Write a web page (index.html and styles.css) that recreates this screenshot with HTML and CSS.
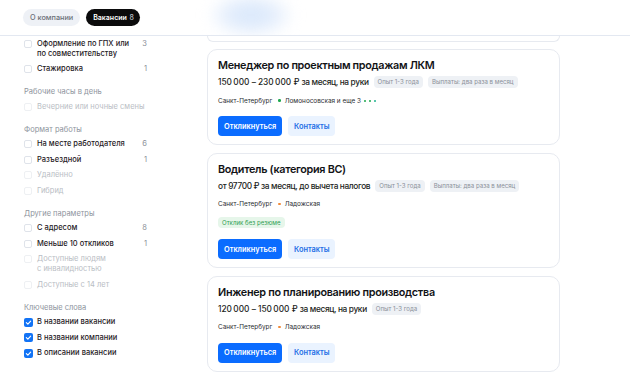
FILE: index.html
```html
<!DOCTYPE html>
<html lang="ru">
<head>
<meta charset="utf-8">
<link rel="stylesheet" href="styles.css">
</head>
<body>
<header class="header">
  <div class="blob"></div>
  <span class="tab">О компании</span>
  <span class="tab tab-active">Вакансии <span class="tab-count">8</span></span>
</header>
<main class="layout">
  <aside class="filters">
    <div class="section first">
      <label class="opt"><span class="box"></span><span class="lbl">Оформление по ГПХ или<br>по совместительству</span><span class="cnt">3</span></label>
      <label class="opt"><span class="box"></span><span class="lbl">Стажировка</span><span class="cnt">1</span></label>
    </div>
    <div class="section">
      <div class="sec-title">Рабочие часы в день</div>
      <label class="opt disabled"><span class="box"></span><span class="lbl">Вечерние или ночные смены</span></label>
    </div>
    <div class="section">
      <div class="sec-title">Формат работы</div>
      <label class="opt"><span class="box"></span><span class="lbl">На месте работодателя</span><span class="cnt">6</span></label>
      <label class="opt"><span class="box"></span><span class="lbl">Разъездной</span><span class="cnt">1</span></label>
      <label class="opt disabled"><span class="box"></span><span class="lbl">Удалённо</span></label>
      <label class="opt disabled"><span class="box"></span><span class="lbl">Гибрид</span></label>
    </div>
    <div class="section">
      <div class="sec-title">Другие параметры</div>
      <label class="opt"><span class="box"></span><span class="lbl">С адресом</span><span class="cnt">8</span></label>
      <label class="opt"><span class="box"></span><span class="lbl">Меньше 10 откликов</span><span class="cnt">1</span></label>
      <label class="opt disabled"><span class="box"></span><span class="lbl">Доступные людям<br>с инвалидностью</span></label>
      <label class="opt disabled"><span class="box"></span><span class="lbl">Доступные с 14 лет</span></label>
    </div>
    <div class="section">
      <div class="sec-title">Ключевые слова</div>
      <label class="opt"><span class="box checked"><svg viewBox="0 0 10 10"><path d="M2.6 5.2 4.3 6.8 7.4 3.4" fill="none" stroke="#fff" stroke-width="1.3" stroke-linecap="round" stroke-linejoin="round"/></svg></span><span class="lbl">В названии вакансии</span></label>
      <label class="opt"><span class="box checked"><svg viewBox="0 0 10 10"><path d="M2.6 5.2 4.3 6.8 7.4 3.4" fill="none" stroke="#fff" stroke-width="1.3" stroke-linecap="round" stroke-linejoin="round"/></svg></span><span class="lbl">В названии компании</span></label>
      <label class="opt"><span class="box checked"><svg viewBox="0 0 10 10"><path d="M2.6 5.2 4.3 6.8 7.4 3.4" fill="none" stroke="#fff" stroke-width="1.3" stroke-linecap="round" stroke-linejoin="round"/></svg></span><span class="lbl">В описании вакансии</span></label>
    </div>
  </aside>
  <section class="list">
    <div class="card-tail"></div>
    <article class="card">
      <h2 class="title">Менеджер по проектным продажам ЛКМ</h2>
      <div class="salary-row"><span class="salary">150&#8239;000 – 230&#8239;000 ₽ за месяц, на руки</span><span class="pill">Опыт 1-3 года</span><span class="pill">Выплаты: два раза в месяц</span></div>
      <div class="loc"><span>Санкт-Петербург</span><span class="metro"><i class="dot green"></i>Ломоносовская и еще 3<i class="dot green sm"></i><i class="dot green sm"></i><i class="dot teal sm"></i></span></div>
      <div class="actions"><button class="btn primary">Откликнуться</button><button class="btn secondary">Контакты</button></div>
    </article>
    <article class="card">
      <h2 class="title">Водитель (категория BC)</h2>
      <div class="salary-row"><span class="salary">от 97700 ₽ за месяц, до вычета налогов</span><span class="pill">Опыт 1-3 года</span><span class="pill">Выплаты: два раза в месяц</span></div>
      <div class="loc"><span>Санкт-Петербург</span><span class="metro"><i class="dot orange"></i>Ладожская</span></div>
      <div class="badge-row"><span class="pill green-pill">Отклик без резюме</span></div>
      <div class="actions after-badge"><button class="btn primary">Откликнуться</button><button class="btn secondary">Контакты</button></div>
    </article>
    <article class="card">
      <h2 class="title">Инженер по планированию производства</h2>
      <div class="salary-row"><span class="salary">120&#8239;000 – 150&#8239;000 ₽ за месяц, на руки</span><span class="pill">Опыт 1-3 года</span></div>
      <div class="loc"><span>Санкт-Петербург</span><span class="metro"><i class="dot orange"></i>Ладожская</span></div>
      <div class="actions"><button class="btn primary">Откликнуться</button><button class="btn secondary">Контакты</button></div>
    </article>
  </section>
</main>
</body>
</html>
```
FILE: styles.css
```css
* { box-sizing: border-box; }
html, body { margin: 0; padding: 0; background: #fff; }
body {
  font-family: Inter, "Noto Sans", "DejaVu Sans", sans-serif;
  color: #1b1d21;
  overflow: hidden;
  height: 373px;
}
.header {
  position: relative;
  height: 36px;
  border-bottom: 1px solid #e3e8f1;
  display: flex;
  align-items: center;
  gap: 6px;
  padding: 0 0 1px 23px;
  overflow: hidden;
}
.blob {
  position: absolute;
  left: 208px;
  top: -8px;
  width: 86px;
  height: 46px;
  border-radius: 50%;
  background: radial-gradient(ellipse at center, #d8e7fb 0%, #e4eefc 40%, rgba(240,246,254,0) 72%);
  filter: blur(7px);
}
.tab {
  position: relative;
  height: 17px;
  line-height: 17px;
  padding: 0 7px;
  border-radius: 9px;
  font-size: 7.3px;
  font-weight: 500;
  background: #eef1f6;
  color: #6b7078;
}
.tab-active {
  background: #0b0b0c;
  color: #fff;
  font-weight: 600;
  padding: 0 6px 0 7px;
  font-size: 7px;
}
.tab-count { color: #b8bcc3; margin-left: 1px; font-weight: 500; }

.layout {
  display: grid;
  grid-template-columns: 207px 353px;
  align-items: start;
}
.filters { padding-left: 24px; }
.section { margin-top: 10px; }
.section.first { margin-top: 0; }
.sec-title {
  font-size: 7.5px;
  line-height: 10px;
  color: #8e949d;
  margin-bottom: 2px;
}
.opt {
  display: flex;
  align-items: flex-start;
  width: 123px;
  padding: 2.75px 0;
  font-size: 7.5px;
  line-height: 10px;
  font-weight: 500;
  color: #1f2125;
}
.box {
  flex: 0 0 auto;
  width: 8px;
  height: 8px;
  margin-top: 1px;
  margin-right: 5px;
  border: 1px solid #dfe3ea;
  border-radius: 2px;
  background: #fff;
  display: flex;
  align-items: center;
  justify-content: center;
}
.box.checked {
  width: 9px;
  height: 9px;
  margin-top: 0.5px;
  margin-left: -0.5px;
  margin-right: 4.5px;
  border: none;
  background: #1273f5;
}
.box svg { width: 9px; height: 9px; display: block; }
.lbl { flex: 1; }
.cnt { color: #8b9098; font-weight: 400; width: 6px; text-align: right; }
.opt.disabled { color: #b9bdc4; font-weight: 400; }
.opt.disabled .box { border-color: #eef0f3; }

.list {
  display: flex;
  flex-direction: column;
  gap: 7.5px;
}
.card-tail {
  height: 5.5px;
  border: 1px solid #e7eaf0;
  border-top: none;
  border-radius: 0 0 10px 10px;
}
.card {
  border: 1px solid #e7eaf0;
  border-radius: 10px;
  padding: 10px 10px 8px;
}
.title {
  margin: 0 0 4px;
  font-size: 10.8px;
  line-height: 12px;
  font-weight: 600;
  letter-spacing: -0.3px;
  color: #121316;
}
.salary-row {
  display: flex;
  align-items: center;
  gap: 5px;
  height: 12px;
}
.salary {
  font-size: 8.3px;
  font-weight: 500;
  letter-spacing: -0.35px;
  color: #1c1e22;
  white-space: nowrap;
}
.pill {
  height: 12px;
  line-height: 12px;
  padding: 0 4px;
  border-radius: 4px;
  background: #eef1f5;
  color: #8a9099;
  font-size: 6.1px;
  white-space: nowrap;
}
.green-pill {
  background: #e6f6ea;
  color: #2f9e52;
  height: 11px;
  line-height: 11px;
  display: inline-block;
}
.loc {
  margin-top: 7.5px;
  display: flex;
  align-items: center;
  gap: 6px;
  height: 10px;
  font-size: 6.4px;
  color: #2b2d31;
}
.metro { display: inline-flex; align-items: center; }
.dot {
  display: inline-block;
  width: 2.5px;
  height: 2.5px;
  border-radius: 50%;
  margin-right: 4px;
}
.dot.sm { margin: 0 0 0 3px; width: 2px; height: 2px; }
.dot.green { background: #1fa84f; }
.dot.teal { background: #1fb38f; }
.dot.orange { background: #f08a3a; }
.badge-row { margin-top: 8px; height: 11px; display: flex; }
.actions {
  margin-top: 10.5px;
  display: flex;
  gap: 6px;
}
.actions.after-badge { margin-top: 11px; }
.btn {
  height: 20px;
  border: none;
  border-radius: 4px;
  font-family: inherit;
  font-size: 7.4px;
  font-weight: 600;
  padding: 0 6px;
  cursor: pointer;
}
.btn.primary { background: #0b6cff; color: #fff; width: 64px; }
.btn.secondary { background: #eaf3ff; color: #1f6fe6; width: 47px; }
```
